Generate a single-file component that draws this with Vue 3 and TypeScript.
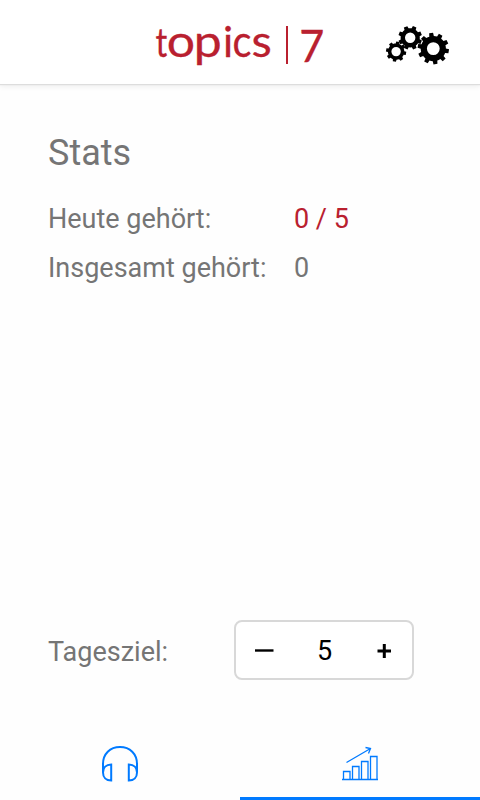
<script setup lang="ts">
import { ref } from 'vue'

interface Gear {
  x: number
  y: number
  outer: number
  root: number
  hole: number
  teeth: number
  turn: number
}

interface Letter {
  char: string
  x: number
  y: number
  size: number
  stretch: number
}

const letters: Letter[] = [
  { char: 't', x: 155.5, y: 57, size: 41, stretch: 0.8 },
  { char: 'o', x: 166.8, y: 57, size: 45, stretch: 1.11 },
  { char: 'p', x: 193.7, y: 57, size: 45, stretch: 1.11 },
  { char: 'i', x: 222.9, y: 57, size: 43, stretch: 0.98 },
  { char: 'c', x: 232.6, y: 57, size: 45, stretch: 0.88 },
  { char: 's', x: 251.6, y: 57, size: 45, stretch: 1.04 },
  { char: '7', x: 299.3, y: 62, size: 45, stretch: 0.96 },
]

const gears: Gear[] = [
  { x: 396.1, y: 51.6, outer: 10.2, root: 8.2, hole: 4.7, teeth: 8, turn: 10 },
  { x: 410.2, y: 37.8, outer: 12, root: 9.6, hole: 5.2, teeth: 8, turn: 22 },
  { x: 433.3, y: 48.6, outer: 15.8, root: 12.6, hole: 6.4, teeth: 10, turn: 10 },
]

function gearPath(g: Gear): string {
  const step = (Math.PI * 2) / g.teeth
  const turn = (g.turn * Math.PI) / 180
  const points: string[] = []
  for (let i = 0; i < g.teeth; i++) {
    const a = i * step + turn
    const corners: [number, number][] = [
      [-0.29, g.root],
      [-0.2, g.outer],
      [0.2, g.outer],
      [0.29, g.root],
      [0.5, g.root],
    ]
    for (const [f, r] of corners) {
      const t = a + f * step
      points.push(`${(g.x + r * Math.cos(t)).toFixed(2)} ${(g.y + r * Math.sin(t)).toFixed(2)}`)
    }
  }
  const h = g.hole
  return `M${points.join('L')}Z M${g.x - h} ${g.y}a${h} ${h} 0 1 0 ${2 * h} 0a${h} ${h} 0 1 0 ${-2 * h} 0Z`
}

const heard = ref(0)
const total = ref(0)
const goal = ref(5)
</script>

<template>
  <div class="app">
    <header class="header">
      <svg class="brand" width="480" height="84" viewBox="0 0 480 84">
        <g class="wordmark">
          <text
            v-for="l in letters"
            :key="l.char"
            :font-size="l.size"
            :transform="`translate(${l.x} ${l.y}) scale(${l.stretch} 1)`"
          >{{ l.char }}</text>
        </g>
        <rect class="divider" x="286" y="26" width="2" height="38" />
        <path v-for="g in gears" :key="g.x" :d="gearPath(g)" fill-rule="evenodd" />
      </svg>
    </header>

    <main class="content">
      <h1>Stats</h1>
      <dl class="stats">
        <dt>Heute gehört:</dt>
        <dd class="today">{{ heard }} / {{ goal }}</dd>
        <dt>Insgesamt gehört:</dt>
        <dd>{{ total }}</dd>
      </dl>
      <div class="goal">
        <span class="label">Tagesziel:</span>
        <div class="stepper">
          <button aria-label="Weniger" @click="goal--">
            <svg width="58" height="56" viewBox="0 0 58 56"><path d="M19 28.500H37.500" /></svg>
          </button>
          <span class="value">{{ goal }}</span>
          <button aria-label="Mehr" @click="goal++">
            <svg width="58" height="56" viewBox="0 0 58 56"><path class="plus" d="M23.500 29H37M30.300 22V36" /></svg>
          </button>
        </div>
      </div>
    </main>

    <nav class="tabs">
      <button class="tab" aria-label="Hören">
        <svg width="40" height="40" viewBox="0 0 40 40">
          <path d="M3 27V19C3 9 10 2 20 2s17 7 17 17v8M11.200 19.500v16C6 35.500 3 32 3 27.500s3-8 8.200-8ZM28.800 19.500v16c5.200 0 8.200-3.500 8.200-8s-3-8-8.200-8Z" />
        </svg>
      </button>
      <button class="tab active" aria-label="Stats">
        <svg class="chart" width="40" height="40" viewBox="0 0 40 40">
          <path d="M2 34.500H38M3.500 34.500V26.500H10V34.500M12.500 34.500V21.500H19V34.500M21.500 34.500V16.500H28V34.500M30.500 34.500V11.500H37V34.500" />
          <path d="M6.500 17.500L30.500 3.500M25.500 2.500L30.500 3.500L28.500 8.500" />
        </svg>
      </button>
    </nav>
  </div>
</template>

<style>
body {
  margin: 0;
}
</style>

<style scoped>
.app {
  display: flex;
  flex-direction: column;
  height: 800px;
  background: #fefefe;
  color: #757575;
  font: 27px/32px Roboto, sans-serif;
}
.header {
  height: 84px;
  background: #fff;
  box-shadow: 0 1px 1px #ddd, 0 2px 6px rgba(0, 0, 0, 0.08);
}
.brand {
  display: block;
}
.wordmark {
  font-family: Lato, sans-serif;
  fill: #b9202f;
  stroke: #b9202f;
  stroke-width: 0.3px;
}
.divider {
  fill: #b9202f;
}
.content {
  flex: 1;
  display: flex;
  flex-direction: column;
  padding: 48px 66px 50px 48px;
}
h1 {
  margin: 0;
  font-size: 36px;
  line-height: 42px;
  font-weight: 400;
}
.stats {
  display: grid;
  grid-template-columns: 246px 1fr;
  row-gap: 17px;
  margin: 29px 0 0;
}
dd {
  margin: 0;
}
.today {
  color: #b9202f;
}
.goal {
  display: flex;
  align-items: center;
  justify-content: space-between;
  margin-top: auto;
}
.label {
  padding-top: 4px;
}
.stepper {
  box-sizing: border-box;
  display: grid;
  grid-template-columns: 58px 1fr 58px;
  align-items: center;
  width: 180px;
  height: 60px;
  border: 2px solid #d8d8d8;
  border-radius: 8px;
  background: #fff;
  color: #000;
}
.value {
  padding: 2px 0 0 1px;
  text-align: center;
}
button {
  display: flex;
  align-items: center;
  justify-content: center;
  padding: 0;
  border: 0;
  background: none;
}
.stepper path {
  stroke: #000;
  stroke-width: 2.4;
}
.stepper .plus {
  stroke-width: 3;
}
.tabs {
  display: grid;
  grid-template-columns: 1fr 1fr;
  height: 70px;
}
.tab {
  box-sizing: border-box;
  padding-top: 3px;
  border-bottom: 3px solid transparent;
}
.tab.active {
  border-bottom-color: #007aff;
}
.tab svg {
  fill: none;
  stroke: #007aff;
  stroke-width: 2;
}
.tab .chart {
  stroke-width: 1.3;
}
</style>
